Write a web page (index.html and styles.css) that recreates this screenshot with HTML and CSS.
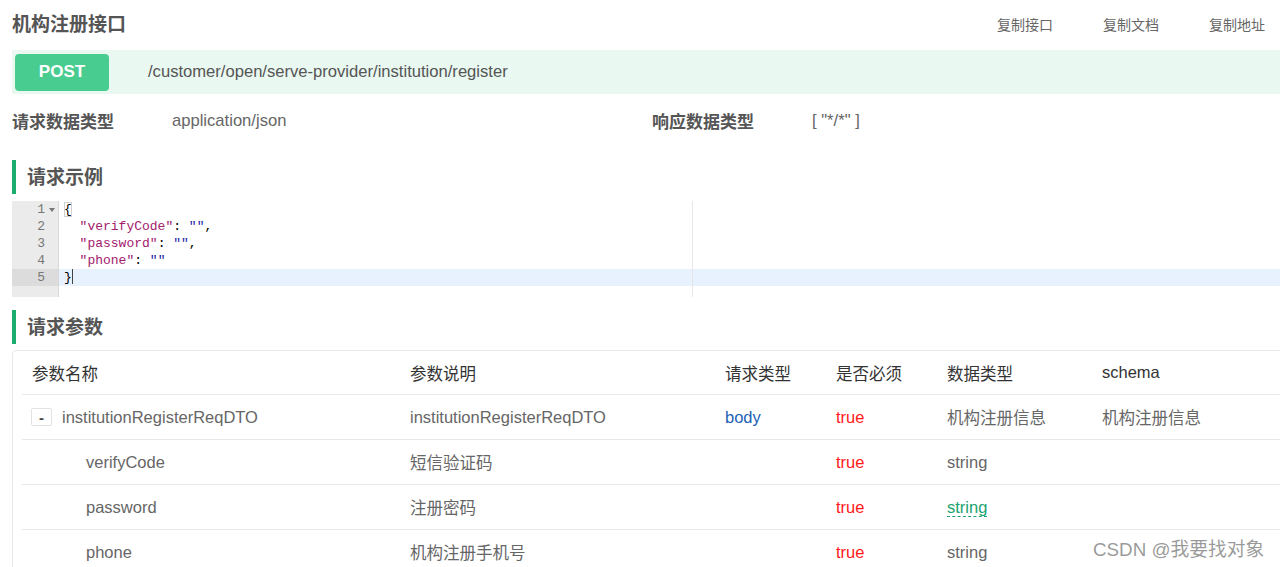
FILE: index.html
```html
<!DOCTYPE html>
<html lang="zh-CN">
<head>
<meta charset="utf-8">
<title>机构注册接口</title>
<link rel="stylesheet" href="styles.css">
</head>
<body>
<div class="page">
  <div class="header">
    <h1 class="title">机构注册接口</h1>
    <div class="actions">
      <span class="action">复制接口</span>
      <span class="action">复制文档</span>
      <span class="action">复制地址</span>
    </div>
  </div>

  <div class="urlbar">
    <span class="method">POST</span>
    <span class="path">/customer/open/serve-provider/institution/register</span>
  </div>

  <div class="meta">
    <div class="meta-item">
      <span class="meta-label">请求数据类型</span>
      <span class="meta-value">application/json</span>
    </div>
    <div class="meta-item">
      <span class="meta-label">响应数据类型</span>
      <span class="meta-value">[ "*/*" ]</span>
    </div>
  </div>

  <div class="section-title">请求示例</div>

  <div class="editor">
    <div class="gutter">
      <div class="ln">1<span class="fold"></span></div>
      <div class="ln">2</div>
      <div class="ln">3</div>
      <div class="ln">4</div>
      <div class="ln active">5</div>
    </div>
    <div class="code">
      <div class="line"><span class="brace">{</span></div>
      <div class="line">  <span class="key">"verifyCode"</span>: <span class="str">""</span>,</div>
      <div class="line">  <span class="key">"password"</span>: <span class="str">""</span>,</div>
      <div class="line">  <span class="key">"phone"</span>: <span class="str">""</span></div>
      <div class="line active">}<span class="cursor"></span></div>
      <div class="margin-line"></div>
    </div>
  </div>

  <div class="section-title second">请求参数</div>

  <div class="table-wrap">
    <div class="trow thead">
      <div class="c c1">参数名称</div>
      <div class="c c2">参数说明</div>
      <div class="c c3">请求类型</div>
      <div class="c c4">是否必须</div>
      <div class="c c5">数据类型</div>
      <div class="c c6">schema</div>
    </div>
    <div class="trow">
      <div class="c c1"><span class="toggle">-</span>institutionRegisterReqDTO</div>
      <div class="c c2">institutionRegisterReqDTO</div>
      <div class="c c3 body">body</div>
      <div class="c c4 req">true</div>
      <div class="c c5">机构注册信息</div>
      <div class="c c6">机构注册信息</div>
    </div>
    <div class="trow">
      <div class="c c1 child">verifyCode</div>
      <div class="c c2">短信验证码</div>
      <div class="c c3"></div>
      <div class="c c4 req">true</div>
      <div class="c c5">string</div>
      <div class="c c6"></div>
    </div>
    <div class="trow">
      <div class="c c1 child">password</div>
      <div class="c c2">注册密码</div>
      <div class="c c3"></div>
      <div class="c c4 req">true</div>
      <div class="c c5"><span class="link">string</span></div>
      <div class="c c6"></div>
    </div>
    <div class="trow">
      <div class="c c1 child">phone</div>
      <div class="c c2">机构注册手机号</div>
      <div class="c c3"></div>
      <div class="c c4 req">true</div>
      <div class="c c5">string</div>
      <div class="c c6"></div>
    </div>
  </div>

  <div class="watermark">CSDN @我要找对象</div>
</div>
</body>
</html>
```

FILE: styles.css
```css
html, body {
  margin: 0;
  padding: 0;
  background: #fff;
  overflow: hidden;
  height: 567px;
}
body {
  font-family: "Liberation Sans", "Noto Sans CJK SC", sans-serif;
  color: #555;
}
.page {
  position: relative;
  padding-left: 12px;
  width: 1300px;
}

.header {
  width: 1255px;
  height: 46px;
  display: flex;
  align-items: center;
  justify-content: space-between;
  margin-bottom: 4px;
}
.title {
  margin: 0;
  font-size: 19px;
  font-weight: bold;
  color: #555;
  line-height: 1;
  padding-top: 2px;
}
.actions {
  display: flex;
  gap: 50px;
  font-size: 14px;
  color: #666;
  padding-top: 1px;
  margin-right: 2px;
}

.urlbar {
  width: 1268px;
  height: 44px;
  background: #e9f8f1;
  display: flex;
  align-items: center;
  box-sizing: border-box;
  padding-left: 3px;
}
.method {
  width: 94px;
  height: 37px;
  background: #49cc90;
  color: #fff;
  border-radius: 4px;
  font-weight: bold;
  font-size: 17px;
  display: flex;
  align-items: center;
  justify-content: center;
}
.path {
  margin-left: 39px;
  font-size: 16.6px;
  color: #555;
}

.meta {
  display: flex;
  height: 54px;
  align-items: center;
}
.meta-item {
  width: 640px;
  display: flex;
  align-items: center;
}
.meta-label {
  width: 160px;
  font-weight: bold;
  font-size: 17px;
  color: #555;
  padding-bottom: 1px;
}
.meta-value {
  font-size: 16.6px;
  color: #666;
}

.section-title {
  margin-top: 12px;
  height: 34px;
  border-left: 4px solid #1aad6e;
  padding-left: 11px;
  display: flex;
  align-items: center;
  font-size: 19px;
  font-weight: bold;
  color: #555;
  box-sizing: border-box;
  padding-bottom: 3px;
}
.section-title.second {
  margin-top: 13px;
}

.editor {
  margin-top: 7px;
  height: 96px;
  display: flex;
  font-family: "Liberation Mono", "DejaVu Sans Mono", monospace;
  font-size: 13px;
}
.gutter {
  width: 47px;
  background: #ebebeb;
  border-right: 1px solid #d8d8d8;
  color: #777;
  box-sizing: border-box;
}
.ln {
  height: 17px;
  line-height: 17px;
  text-align: right;
  padding-right: 13px;
  position: relative;
}
.ln.active {
  background: #dcdcdc;
}
.fold {
  position: absolute;
  right: 3px;
  top: 7px;
  width: 0;
  height: 0;
  border-left: 3px solid transparent;
  border-right: 3px solid transparent;
  border-top: 4px solid #777;
}
.code {
  flex: 1;
  position: relative;
}
.line {
  height: 17px;
  line-height: 17px;
  padding-left: 5px;
  white-space: pre;
  color: #000;
}
.line.active {
  background: #e8f2fe;
}
.brace {
  outline: 1px solid #d0d0d0;
  outline-offset: -1px;
}
.key { color: #a3206e; }
.str { color: #1a1aa6; }
.cursor {
  display: inline-block;
  width: 1px;
  height: 15px;
  background: #444;
  vertical-align: -3px;
}
.margin-line {
  position: absolute;
  left: 633px;
  top: 0;
  width: 1px;
  height: 96px;
  background: #e6e6e6;
}

.table-wrap {
  margin-top: 6px;
  width: 1290px;
  border: 1px solid #e8e8e8;
  border-radius: 4px;
  padding: 0 9px;
  box-sizing: border-box;
}
.trow {
  display: flex;
  height: 45px;
  box-sizing: border-box;
  align-items: center;
  border-bottom: 1px solid #e8e8e8;
  font-size: 16.5px;
  color: #666;
}
.trow.thead {
  height: 44px;
  color: #333;
}
.c {
  padding-left: 10px;
  box-sizing: border-box;
  display: flex;
  align-items: center;
  white-space: nowrap;
}
.c1 { width: 378px; }
.c2 { width: 315px; }
.c3 { width: 111px; }
.c4 { width: 111px; }
.c5 { width: 155px; }
.c6 { flex: 1; }
.c1.child { padding-left: 64px; }
.toggle {
  width: 21px;
  height: 18px;
  box-sizing: border-box;
  border: 1px solid #e2e2e2;
  border-radius: 2px;
  display: inline-flex;
  align-items: center;
  justify-content: center;
  font-size: 15px;
  font-weight: bold;
  color: #444;
  margin-left: -1px;
  margin-right: 10px;
  line-height: 1;
}
.body { color: #1d5fb6; }
.req { color: #ff1a1a; }
.link {
  color: #1aa36f;
  border-bottom: 1px dashed #1aa36f;
  line-height: 18px;
}

.watermark {
  position: absolute;
  left: 1093px;
  top: 534px;
  font-size: 18.8px;
  color: rgba(120, 120, 120, 0.75);
  white-space: nowrap;
}
```
